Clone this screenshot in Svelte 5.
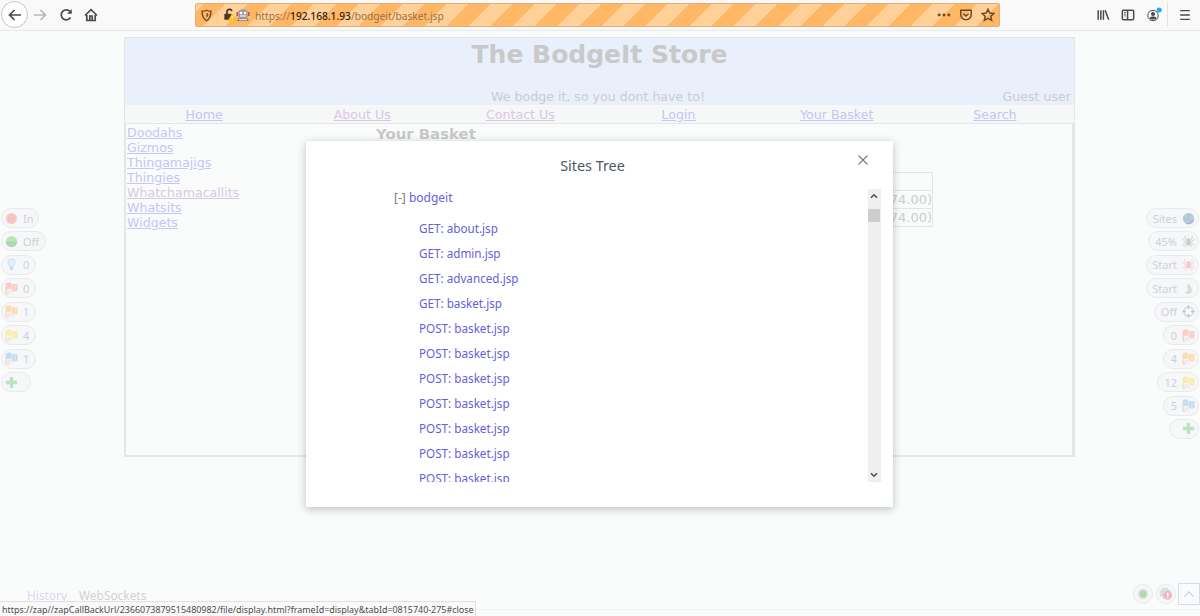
<script lang="ts">
  const nav = [
    { label: 'Home' },
    { label: 'About Us', visited: true },
    { label: 'Contact Us', visited: true },
    { label: 'Login' },
    { label: 'Your Basket' },
    { label: 'Search' }
  ]
  const categories = ['Doodahs', 'Gizmos', 'Thingamajigs', 'Thingies', 'Whatchamacallits', 'Whatsits', 'Widgets']

  const leftTools = [
    { icon: 'break', text: 'In', width: 38 },
    { icon: 'dot', text: 'Off', width: 45 },
    { icon: 'bulb', text: '0', width: 35 },
    { icon: 'flag', color: '#f9cdc8', text: '0', width: 35 },
    { icon: 'flag', color: '#fbddb5', text: '1', width: 35 },
    { icon: 'flag', color: '#f8ecae', text: '4', width: 35 },
    { icon: 'flag', color: '#c6dcf3', text: '1', width: 35 },
    { icon: 'plus', text: '', width: 30 }
  ]
  const rightTools = [
    { icon: 'globe', text: 'Sites', width: 53 },
    { icon: 'spider', color: '#c9cccc', text: '45%', width: 51 },
    { icon: 'spider', color: '#f3c8c9', text: 'Start', width: 53 },
    { icon: 'flame', text: 'Start', width: 53 },
    { icon: 'target', text: 'Off', width: 45 },
    { icon: 'flag', color: '#f9cdc8', text: '0', width: 36 },
    { icon: 'flag', color: '#fbddb5', text: '4', width: 36 },
    { icon: 'flag', color: '#f8ecae', text: '12', width: 42 },
    { icon: 'flag', color: '#c6dcf3', text: '5', width: 36 },
    { icon: 'plus', text: '', width: 30 }
  ]

  const nodes = [
    'GET: about.jsp',
    'GET: admin.jsp',
    'GET: advanced.jsp',
    'GET: basket.jsp',
    ...Array(7).fill('POST: basket.jsp')
  ]
</script>

{#snippet toolIcon(name, color)}
  <svg class="ticon" viewBox="0 0 14 14" fill="none">
    {#if name === 'break'}
      <circle cx="7" cy="7" r="6" fill="#f8cccb" />
      <circle cx="7" cy="7" r="3.6" stroke="#f3b5b5" stroke-width=".9" />
      <circle cx="7" cy="7" r="1.5" fill="#f3b9b8" />
    {:else if name === 'dot'}
      <circle cx="7" cy="7" r="6" fill="#bde3bd" />
      <path d="M1 7a6 6 0 0 0 12 0z" fill="#add9ae" />
    {:else if name === 'bulb'}
      <path d="M5 9.2C4.7 7.5 3 6.7 3 4.600a4 4 0 0 1 8 0c0 2.100-1.700 2.900-2 4.600z" fill="#e0effa" stroke="#c9dff1" stroke-width=".8" />
      <path d="M5.300 10h3.400v2.200L7 13.400l-1.700-1.200z" fill="#cfd3d5" />
    {:else if name === 'flag'}
      <path d="M.6 1.600C2.500.2 4.500.6 7 1l.5 1.600c1.800-.8 3.700-.3 6-.1v7.300c-2 .4-3.900.4-5.500.1l-1-2c-2.500-.8-4-.6-5.200 0V13H.6z" fill={color} />
      <path d="M7 1v6.900M10.800 2.800v6.800" stroke="#fff" stroke-opacity=".5" stroke-width=".8" />
      <path d="M1.200 8.700v4.700h2.300V9M5.500 8.500V11l2.500 1.500" stroke="#ecdccb" stroke-width="1" />
    {:else if name === 'plus'}
      <path d="M5.200 1h3.600v4.200H13v3.600H8.800V13H5.200V8.800H1V5.200h4.200z" fill="#b9e4bd" />
    {:else if name === 'globe'}
      <circle cx="7" cy="7" r="6" fill="#b8bfe8" />
      <path d="M2 4c1.500-2 3-2.700 5-2.700L6 4 4.200 6.500zM8.500 4.200l2.600-1c1.300 1.700 1.700 3 1.500 4.500L10 9zM3 9l3 .5 1 3C5 12.500 3.500 11 3 9z" fill="#afdcbb" />
      <path d="M4.500 12A5.600 5.600 0 0 0 12.500 8.500" stroke="#a9b1cc" stroke-width="1.200" />
    {:else if name === 'spider'}
      <ellipse cx="7" cy="8.500" rx="2.100" ry="3" fill={color} />
      <circle cx="7" cy="4.800" r="1.700" fill={color} />
      <path d="M6 6L3.500 4.500 3 1M8 6l2.500-1.500L11 1M5.500 7L2.500 6.500.5 4M8.500 7l3-.5 2-2.500M5.500 8.500l-3 .5-2 2.500M8.500 8.500l3 .5 2 2.500M6 9.500L3.800 11l-.5 2.500M8 9.500l2.200 1.500.5 2.500" stroke={color} stroke-width=".9" />
    {:else if name === 'flame'}
      <path d="M6.500 1c.3 2 4 3.700 4 7.700 0 2.600-1.500 4.300-3.700 4.300C4.600 13 3.400 11.600 3.300 10c1 .8 2 .7 2.500 0 1.300-1.500-.2-3 0-5C5.900 3 6.500 2.300 6.500 1z" fill="#d3d7d7" />
      <path d="M7.300 6.500c1.500 2 1.300 4.500-.8 5" stroke="#eef0f0" />
    {:else if name === 'target'}
      <circle cx="7" cy="7" r="5" stroke="#d3d6d6" stroke-width="1.400" />
      <path d="M7 .3v4M7 9.700v4M.3 7h4M9.700 7h4" stroke="#c3c7c7" stroke-width="1.500" />
    {/if}
  </svg>
{/snippet}

<div class="browser">
  <header class="toolbar">
    <div class="navbtns">
      <span class="back">
        <svg viewBox="0 0 16 16" width="16" height="16"><path d="M14 8H3M7.500 3L2.500 8l5 5" /></svg>
      </span>
      <svg class="forward" viewBox="0 0 16 16" width="16" height="16"><path d="M2 8h11M8.500 3l5 5-5 5" /></svg>
      <svg class="reload" viewBox="0 0 16 16" width="16" height="16"><path d="M12.500 10.500A5 5 0 1 1 12 4.500L13 6" /><path d="M13.700 2v4.700H9z" fill="#4a4a4f" stroke="none" /></svg>
      <svg class="home" viewBox="0 0 16 16" width="16" height="16"><path d="M2 8.500L8 2.700l6 5.800M3.800 8v5.500h8.400V8" /><path d="M6.800 13V9h2.400v4" /></svg>
    </div>

    <div class="urlbar">
      <svg class="shield" viewBox="0 0 16 16" width="13" height="13"><path d="M8 1.500c1.500 1 3.200 1.200 5.500 1.200 0 5-1.300 9-5.500 11.800C3.800 11.700 2.500 7.700 2.500 2.700c2.300 0 4-.2 5.500-1.200z" /><path d="M8 4.800v6c1.500-1.200 2.200-3 2.400-5z" fill="#6a4a2a" stroke="none" /></svg>
      <i class="sep"></i>
      <svg class="lock" viewBox="0 0 16 16" width="14" height="14">
        <path d="M4.500 8V4.500a3 3 0 0 1 5.800-1" fill="none" stroke="#4d3820" stroke-width="1.900" />
        <rect x="1.500" y="6.500" width="8.500" height="7" rx="1" fill="#4d3820" />
        <path d="M10.500 6l5.500 9H5z" fill="#ffbf1b" /><path d="M10.500 9v3M10.500 13v1" stroke="#fff" stroke-width="1.200" />
      </svg>
      <svg class="robot" viewBox="0 0 14 14" width="14" height="14">
        <path d="M2.500 3Q7-.8 11.500 3v6h-9z" fill="#999da5" /><path d="M3.200 9.500h7.600L13 13H1z" fill="#73777e" />
        <path d="M1.300 4v4M12.700 4v4" stroke="#d4425a" stroke-width="1.600" />
        <circle cx="5" cy="5" r="1.300" fill="#fff" /><circle cx="9" cy="5" r="1.300" fill="#fff" />
        <path d="M4 8h6M3 11.500h8" stroke="#e1e3e5" />
      </svg>
      <span class="url">https://<b>192.168.1.93</b>/bodgeit/basket.jsp</span>
      <span class="urlactions">
        <svg viewBox="0 0 16 16" width="14" height="14" class="dots"><circle cx="2.500" cy="8" r="1.700" /><circle cx="8" cy="8" r="1.700" /><circle cx="13.500" cy="8" r="1.700" /></svg>
        <svg viewBox="0 0 16 16" width="14" height="14"><path d="M2 2.500h12v5a6 6 0 0 1-12 0zM5 6.500l3 2.700 3-2.700" /></svg>
        <svg viewBox="0 0 16 16" width="14" height="14"><path d="M8 1.500l2 4.300 4.700.5-3.500 3.200 1 4.700L8 11.900l-4.200 2.300 1-4.700L1.300 6.300 6 5.800z" /></svg>
      </span>
    </div>

    <div class="chromeicons">
      <svg viewBox="0 0 16 16" width="14" height="14"><path d="M2.500 2.500v11M5.500 2.500v11M8.500 2.500v11M10.500 2.500l4 11" /></svg>
      <svg viewBox="0 0 16 16" width="14" height="14"><rect x="1.500" y="2.500" width="13" height="11" rx="1.500" /><path d="M7.500 2.500v11" /><path d="M3.500 5h2M3.500 7h2M3.500 9h2" stroke-width="1" /></svg>
      <svg viewBox="0 0 16 16" width="16" height="16" class="account"><circle cx="7" cy="8.500" r="5.200" stroke-width="1" /><circle cx="7" cy="7" r="2" fill="#4a4a4f" stroke="none" /><path d="M3.500 11c1-2 6-2 7 0-1.500 2-5.500 2-7 0z" fill="#4a4a4f" stroke="none" /><circle cx="13.200" cy="3" r="2.500" fill="#13b1fb" stroke="none" /></svg>
      <i class="menusep"></i>
      <svg viewBox="0 0 16 16" width="14" height="14" class="menu"><path d="M2.500 3h11M2.500 8h11M2.500 13h11" /></svg>
    </div>
  </header>

  <main class="page">
    <section class="store">
      <div class="banner">
        <h1>The BodgeIt Store</h1>
        <div class="sub"><span></span><span class="motto">We bodge it, so you dont have to!</span><span class="guest">Guest user</span></div>
      </div>
      <nav>
        {#each nav as item}
          <span><a href="#top" class:visited={item.visited}>{item.label}</a></span>
        {/each}
      </nav>
      <div class="content">
        <div class="cats">
          {#each categories as cat}
            <a href="#top" class:visited={cat === 'Whatchamacallits'}>{cat}</a>
          {/each}
        </div>
        <div class="basket">
          <h3>Your Basket</h3>
          <div class="totals">
            <span></span>
            <span>74.00)</span>
            <span>74.00)</span>
          </div>
        </div>
      </div>
    </section>

    <aside class="hud left">
      {#each leftTools as tool}
        <div class="pill" style="width: {tool.width}px">
          {@render toolIcon(tool.icon, tool.color)}<span>{tool.text}</span>
        </div>
      {/each}
    </aside>

    <aside class="hud right">
      {#each rightTools as tool}
        <div class="pill" style="width: {tool.width}px">
          <span>{tool.text}</span>{@render toolIcon(tool.icon, tool.color)}
        </div>
      {/each}
    </aside>

    <div class="tabs"><span class="active">History</span><span>WebSockets</span></div>
    <div class="bottomtools">
      <span class="round"><svg viewBox="0 0 14 14" width="12" height="12"><circle cx="7" cy="7" r="5" fill="#b0d6b4" stroke="#dde3e3" stroke-width="2" /></svg></span>
      <span class="round"><svg viewBox="0 0 16 16" width="14" height="14"><circle cx="7" cy="7" r="5.500" fill="#dadddd" stroke="#dadddd" stroke-width="2.500" stroke-dasharray="2.300 2" /><circle cx="10" cy="9.500" r="5" fill="#efb9bd" /><path d="M10 6.500v3.500M10 11v1.500" stroke="#fff" stroke-width="1.600" /></svg></span>
      <span class="expand"><svg viewBox="0 0 12 12" width="12" height="12"><path d="M1.500 8.500L6 4l4.500 4.500" fill="none" stroke="#d3cff5" stroke-width="1.300" /></svg></span>
    </div>

    <div class="modal">
      <h2>Sites Tree</h2>
      <svg class="close" viewBox="0 0 10 10" width="10" height="10"><path d="M.5.5l9 9M9.500.5l-9 9" /></svg>
      <div class="scroller">
        <div class="tree">
          <div class="root">[-] <a href="#close">bodgeit</a></div>
          {#each nodes as node}
            <a href="#close" class="node">{node}</a>
          {/each}
        </div>
        <div class="scrollbar">
          <svg viewBox="0 0 8 6" width="8" height="6"><path d="M1 4.800L4 1.800l3 3" /></svg>
          <i class="thumb"></i>
          <svg class="down" viewBox="0 0 8 6" width="8" height="6"><path d="M1 1.200l3 3 3-3" /></svg>
        </div>
      </div>
    </div>

    <div class="frameline"></div>
    <div class="status">https://zap//zapCallBackUrl/2366073879515480982/file/display.html?frameId=display&amp;tabId=0815740-275#close</div>
  </main>
</div>

<style>
  :global(body) {
    background: #fafcfb;
    overflow: hidden;
  }
  .browser {
    width: 1200px;
    height: 616px;
    display: flex;
    flex-direction: column;
    font-family: "Noto Sans", "Open Sans", sans-serif;
  }
  .browser * {
    box-sizing: border-box;
  }
  svg {
    display: block;
    flex: none;
  }

  /* browser chrome */
  .toolbar {
    height: 31px;
    flex: none;
    display: flex;
    align-items: flex-start;
    background: #f9f9fa;
    border-bottom: 1px solid #e8e9e9;
  }
  .toolbar svg {
    fill: none;
    stroke: #4a4a4f;
    stroke-width: 1.7;
  }
  .navbtns {
    width: 195px;
    height: 29px;
    padding-left: 1px;
    display: flex;
    align-items: center;
  }
  .back {
    width: 27px;
    height: 27px;
    border: 1px solid #c5c5c6;
    border-radius: 50%;
    background: #fff;
    display: flex;
    align-items: center;
    justify-content: center;
  }
  .navbtns .forward {
    stroke: #b8b8ba;
    margin-left: 4px;
  }
  .reload {
    margin-left: 10px;
  }
  .home {
    margin-left: 9px;
  }
  .urlbar {
    width: 805px;
    height: 24px;
    margin-top: 3px;
    padding: 0 4px 0 4px;
    display: flex;
    align-items: center;
    border: 1px solid #dfb079;
    border-radius: 2px;
    background: repeating-linear-gradient(-45deg, #ffb766 0 15.600px, #ffd097 15.600px 31.250px);
  }
  .urlbar svg.shield,
  .urlactions svg {
    stroke: #6a4a2a;
  }
  .sep {
    width: 1px;
    height: 16px;
    background: #f2c797;
    margin: 0 5px 0 4px;
  }
  .urlbar .lock {
    stroke: none;
  }
  .urlbar .robot {
    stroke: none;
    margin-left: -1px;
  }
  .url {
    margin-left: 5px;
    padding-top: 1px;
    font-size: 10.200px;
    line-height: 22px;
    color: #96744d;
    white-space: nowrap;
  }
  .url b {
    color: #33220f;
    font-weight: 500;
  }
  .urlactions {
    margin-left: auto;
    display: flex;
    gap: 8px;
  }
  .urlactions .dots {
    fill: #6a4a2a;
    stroke: none;
  }
  .chromeicons {
    flex: 1;
    height: 29px;
    padding-left: 96px;
    display: flex;
    align-items: center;
  }
  .chromeicons svg + svg {
    margin-left: 11px;
  }
  .menusep {
    width: 1px;
    height: 25px;
    background: #e2e2e3;
    margin-left: 5px;
  }
  .menu {
    margin-left: 10px;
  }

  .page {
    position: relative;
    flex: 1;
    padding: 6px 125px 0 124px;
    background: #fafcfb;
  }
  .store {
    height: 420px;
    display: flex;
    flex-direction: column;
    border: 1px solid #e4e6e6;
    border-bottom: 0;
    color: #cbcccc;
    font-family: "DejaVu Sans", sans-serif;
    font-size: 12.600px;
  }
  .banner {
    height: 67px;
    flex: none;
    background: #eaf0fb;
  }
  h1 {
    margin: 0;
    height: 50px;
    font-size: 25px;
    line-height: 33px;
    text-align: center;
    color: #c8c9c8;
  }
  .sub {
    display: grid;
    grid-template-columns: 1fr auto 1fr;
    line-height: 17px;
    padding-right: 3px;
  }
  .guest {
    text-align: right;
  }
  .store nav {
    height: 18px;
    flex: none;
    display: grid;
    grid-template-columns: repeat(6, 1fr);
    text-align: center;
    line-height: 19px;
    background: #f6f7f7;
  }
  .store a {
    color: #c6c4fa;
  }
  .store a.visited {
    color: #d9c8e4;
  }
  .content {
    flex: 1;
    display: flex;
    border: 1px solid #e5e7e7;
    border-right-width: 2px;
    border-bottom-width: 2px;
  }
  .cats {
    width: 249px;
    padding: 1px 0 0 1px;
    display: flex;
    flex-direction: column;
    align-items: flex-start;
    line-height: 15px;
  }
  .basket {
    width: 558px;
  }
  h3 {
    margin: 2px 0 0 1px;
    font-size: 14.900px;
    line-height: 17px;
    color: #c8c9c8;
  }
  .totals {
    margin-top: 29px;
    display: grid;
    grid-template-rows: 18px 18px 18px;
    text-align: right;
    line-height: 18px;
    font-size: 13px;
    border: 1px solid #e4e6e6;
    border-bottom: 0;
  }
  .totals span {
    border-bottom: 1px solid #e4e6e6;
  }

  /* hud panels */
  .hud {
    position: absolute;
    top: 177px;
    display: flex;
    flex-direction: column;
    gap: 3.450px;
  }
  .left {
    left: 1px;
  }
  .right {
    right: 1px;
    align-items: flex-end;
  }
  .pill {
    height: 20px;
    padding: 0 3px;
    display: flex;
    align-items: center;
    gap: 5px;
    border: 1px solid #e8ebeb;
    border-radius: 10px;
    background: #f6f7f9;
    color: #cfd0d6;
    font-size: 11px;
    line-height: 19px;
  }
  .right .pill {
    justify-content: flex-end;
    padding: 0 3px;
  }
  .ticon {
    width: 13px;
    height: 13px;
  }
  .tabs {
    position: absolute;
    left: 27px;
    top: 555px;
    display: flex;
    gap: 12px;
    font-size: 11.900px;
    line-height: 18px;
    color: #cfd1d3;
  }
  .active {
    color: #d8d5f6;
  }
  .bottomtools {
    position: absolute;
    right: 0;
    top: 552px;
    display: flex;
    align-items: center;
  }
  .round {
    width: 20px;
    height: 20px;
    margin-right: 3.500px;
    border: 1px solid #e7eaea;
    border-radius: 50%;
    background: #f6f7f8;
    display: flex;
    align-items: center;
    justify-content: center;
  }
  .round:nth-child(2) {
    margin-right: 2px;
  }
  .expand {
    width: 22px;
    height: 22px;
    border: 1px solid #dcd9f8;
    display: flex;
    align-items: center;
    justify-content: center;
  }

  .modal {
    position: absolute;
    left: 306px;
    top: 110px;
    width: 587px;
    height: 366px;
    padding: 15px 12px 0 88px;
    background: #fff;
    border-radius: 1px;
    box-shadow: 0 2px 8px rgba(50, 60, 75, .33);
    color: #777a80;
    font-size: 11.700px;
  }
  h2 {
    margin: 0 12px 14px -78px;
    font-size: 14.400px;
    line-height: 19px;
    font-weight: 400;
    text-align: center;
    color: #4d5663;
  }
  .close {
    position: absolute;
    right: 25px;
    top: 14px;
    stroke: #747d86;
    stroke-width: 1.100;
  }
  .scroller {
    height: 293px;
    display: flex;
    overflow: hidden;
  }
  .tree {
    flex: 1;
  }
  .tree a {
    color: #6460dc;
    text-decoration: none;
  }
  .root {
    height: 27px;
    font-size: 12px;
    line-height: 17px;
  }
  .node {
    display: block;
    height: 25px;
    padding-left: 25px;
    line-height: 25px;
    white-space: nowrap;
  }
  .scrollbar {
    width: 13px;
    height: 293px;
    padding: 4px 0;
    display: flex;
    flex-direction: column;
    align-items: center;
    background: #efefef;
  }
  .scrollbar svg {
    fill: none;
    stroke: #505050;
    stroke-width: 1.600;
    margin-right: 1px;
  }
  .thumb {
    width: 12px;
    height: 13px;
    margin: 10px 1px 0 0;
    background: #cdcdcd;
  }
  .scrollbar .down {
    margin-top: auto;
  }
  .frameline {
    position: absolute;
    left: 0;
    right: 0;
    bottom: 6px;
    height: 1px;
    background: #f1f3f3;
  }
  .status {
    position: absolute;
    left: 0;
    bottom: 0;
    width: 476px;
    height: 15px;
    padding-left: 2px;
    border: 1px solid #dfe1e1;
    border-left: 0;
    border-bottom: 0;
    background: #f9f9fa;
    color: #4c4c4c;
    font-size: 8.930px;
    line-height: 16px;
    white-space: nowrap;
  }
</style>
